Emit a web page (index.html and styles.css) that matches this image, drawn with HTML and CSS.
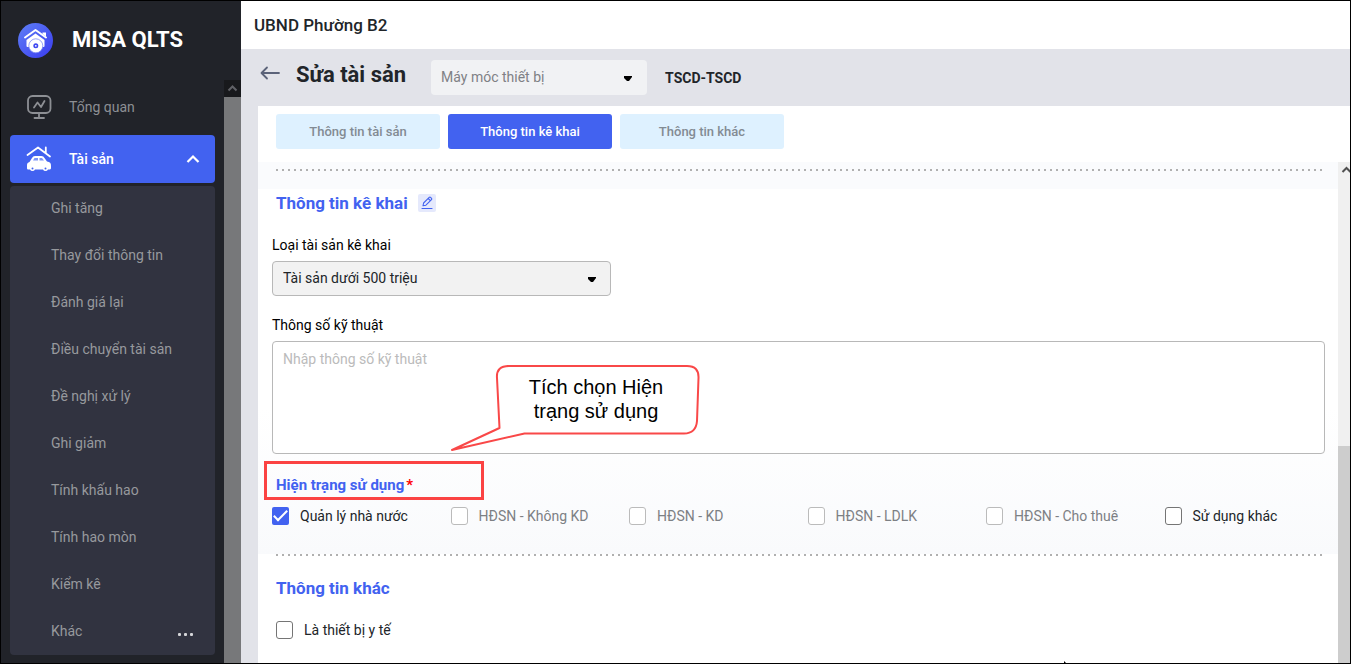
FILE: index.html
```html
<!DOCTYPE html>
<html lang="vi">
<head>
<meta charset="utf-8">
<meta name="viewport" content="width=device-width, initial-scale=1">
<title>MISA QLTS</title>
<link rel="stylesheet" href="styles.css">
</head>
<body>
<div class="app">
  <aside class="sidebar">
    <div class="brand">
      <svg class="brand-logo" viewBox="0 0 35 35" aria-hidden="true">
        <defs><linearGradient id="lg" x1="0" y1="0" x2="1" y2="1"><stop offset="0" stop-color="#5f80f6"/><stop offset="1" stop-color="#3a3bef"/></linearGradient></defs>
        <circle cx="17.500" cy="17.500" r="17.500" fill="url(#lg)"/>
        <path d="M7 14.500 17.500 7 28 14.500" fill="none" stroke="#fff" stroke-width="2" stroke-linecap="round" stroke-linejoin="round"/>
        <path d="M24.500 9.500h3.500v4L24.500 11z" fill="#fff"/>
        <path d="M8.500 17 17.500 10.500l9 6.500V23a1 1 0 0 1-1 1h-16a1 1 0 0 1-1-1z" fill="#fff"/>
        <circle cx="17.800" cy="22.800" r="7" fill="#fff" stroke="#7d8bf6" stroke-width="0.800"/>
        <circle cx="17.800" cy="22.800" r="2.500" fill="#3f48f0"/>
        <circle cx="17.800" cy="22.800" r="0.900" fill="#fff"/>
      </svg>
      <span class="brand-name">MISA QLTS</span>
    </div>
    <div class="side-body">
      <nav class="nav">
        <a class="nav-item" href="#">
          <svg class="nav-icon" viewBox="0 0 26 26" fill="none" stroke="#8d8f94" stroke-width="1.800" stroke-linecap="round" stroke-linejoin="round" aria-hidden="true">
            <rect x="2" y="2" width="22.500" height="17" rx="4.500"/>
            <path d="M13 19v4.500M8.500 24h9.500"/>
            <path d="M8 13.500 11.500 8.500l3.500 4.500 3.500-6"/>
          </svg>
          Tổng quan
        </a>
        <a class="nav-item active" href="#">
          <svg class="nav-icon" viewBox="0 0 26 26" aria-hidden="true">
            <path d="M1.500 9 12 1.500 24 10.500M19.800 7V1.500" fill="none" stroke="#fff" stroke-width="1.800" stroke-linecap="round" stroke-linejoin="round"/>
            <path d="M3.500 16 6 12a3.500 3.500 0 0 1 3-2h6.500a4 4 0 0 1 3 2l2.500 3.500c3 .3 4 1.500 4 4.500v2c0 1-.8 1.500-2 1.500h-1a2.800 2.800 0 0 1-5 0H9a2.800 2.800 0 0 1-5 0H2.500C1.500 23.500 1 23 1 22v-3c0-1.500 1-2.700 2.500-3z" fill="#fff"/>
            <path d="M7 14.500 8.500 12H12v2.500zM13.500 14.500V12h2.500l2 2.500z" fill="#7f95f5"/>
            <circle cx="6.500" cy="22.500" r="1" fill="#4262f0"/><circle cx="19.500" cy="22.500" r="1" fill="#4262f0"/>
          </svg>
          Tài sản
          <svg class="nav-caret" viewBox="0 0 14 10" aria-hidden="true"><path d="M1.500 8 7 2.500 12.500 8" fill="none" stroke="#fff" stroke-width="2.200"/></svg>
        </a>
        <ul class="submenu">
          <li><a href="#">Ghi tăng</a></li>
          <li><a href="#">Thay đổi thông tin</a></li>
          <li><a href="#">Đánh giá lại</a></li>
          <li><a href="#">Điều chuyển tài sản</a></li>
          <li><a href="#">Đề nghị xử lý</a></li>
          <li><a href="#">Ghi giảm</a></li>
          <li><a href="#">Tính khấu hao</a></li>
          <li><a href="#">Tính hao mòn</a></li>
          <li><a href="#">Kiểm kê</a></li>
          <li><a href="#">Khác
            <svg class="more" viewBox="0 0 16 4" fill="#d5d6d9" aria-hidden="true"><rect x="0" y="0" width="3" height="3" rx="1"/><rect x="6" y="0" width="3" height="3" rx="1"/><rect x="12" y="0" width="3" height="3" rx="1"/></svg></a></li>
        </ul>
      </nav>
      <div class="side-scroll">
        <svg viewBox="0 0 17 17" aria-hidden="true"><path d="M4.500 10.500l4-4 4 4" fill="none" stroke="#606166" stroke-width="2"/></svg>
      </div>
    </div>
  </aside>

  <main class="main">
    <header class="topbar">UBND Phường B2</header>
    <div class="titlebar">
      <button class="back" type="button" aria-label="Quay lại">
        <svg viewBox="0 0 20 14" aria-hidden="true"><path d="M19 7H2M7 1.500 1.500 7 7 12.500" fill="none" stroke="#5b6379" stroke-width="1.800" stroke-linecap="round" stroke-linejoin="round"/></svg>
      </button>
      <h1 class="title">Sửa tài sản</h1>
      <div class="picker picker-type">
        <select aria-label="Loại tài sản" disabled><option>Máy móc thiết bị</option></select>
        <svg class="arrow" viewBox="0 0 8 6" aria-hidden="true"><path d="M0 0h8v1L5 5H3L0 2z"/></svg>
      </div>
      <strong class="code">TSCD-TSCD</strong>
    </div>
    <div class="panel">
      <div class="tabs">
        <button type="button" class="tab">Thông tin tài sản</button>
        <button type="button" class="tab selected">Thông tin kê khai</button>
        <button type="button" class="tab">Thông tin khác</button>
      </div>
      <div class="scroller">
        <div class="content">
          <div class="prev-section"><div class="dots"></div></div>
          <section class="section declare">
            <div class="heading-row">
              <h2 class="heading">Thông tin kê khai</h2>
              <button class="edit" type="button" aria-label="Sửa">
                <svg viewBox="0 0 18 18" fill="none" stroke="#4262f0" stroke-width="1.100" stroke-linejoin="round" stroke-linecap="round" aria-hidden="true"><path d="M4 14.500h10"/><path d="M5 11.800 5.600 9 11.200 3.400a1 1 0 0 1 1.400 0l.9.900a1 1 0 0 1 0 1.400L7.900 11.200zM10.200 4.500l2.200 2.200"/></svg>
              </button>
            </div>
            <label class="label" for="kind">Loại tài sản kê khai</label>
            <div class="picker picker-kind">
              <select id="kind"><option>Tài sản dưới 500 triệu</option></select>
              <svg class="arrow" viewBox="0 0 8 6" aria-hidden="true"><path d="M0 0h8v1L5 5H3L0 2z"/></svg>
            </div>
            <label class="label" for="spec">Thông số kỹ thuật</label>
            <div class="spec-wrap">
              <textarea id="spec" class="spec" placeholder="Nhập thông số kỹ thuật"></textarea>
              <div class="callout">
                <svg viewBox="0 0 250 88" aria-hidden="true"><path d="M57 2H237Q249 2 248.500 14L247 57Q246 69.500 234 69.500H74.500L2 86 49.500 64 47 14Q46 2 59 2z" fill="#fff" stroke="#f94848" stroke-width="2" stroke-linejoin="round"/></svg>
                <p>Tích chọn Hiện<br>trạng sử dụng</p>
              </div>
            </div>
            <h3 class="subheading">Hiện trạng sử dụng<span class="req">*</span></h3>
            <div class="checks">
              <label class="check"><input type="checkbox" checked>Quản lý nhà nước</label>
              <label class="check off"><input type="checkbox" disabled>HĐSN - Không KD</label>
              <label class="check off"><input type="checkbox" disabled>HĐSN - KD</label>
              <label class="check off"><input type="checkbox" disabled>HĐSN - LDLK</label>
              <label class="check off"><input type="checkbox" disabled>HĐSN - Cho thuê</label>
              <label class="check"><input type="checkbox">Sử dụng khác</label>
            </div>
          </section>
          <section class="section other">
            <div class="dots"></div>
            <h2 class="heading">Thông tin khác</h2>
            <label class="check"><input type="checkbox">Là thiết bị y tế</label>
          </section>
        </div>
        <div class="main-scroll">
          <svg viewBox="0 0 12 17" aria-hidden="true"><path d="M4.500 10l4-4 4 4" fill="none" stroke="#505050" stroke-width="2"/></svg>
          <div class="thumb"></div>
        </div>
      </div>
    </div>
  </main>
  <svg class="pointer" viewBox="0 0 3 3" aria-hidden="true"><path d="M0 0l3 3H0z"/></svg>
</div>
</body>
</html>
```
FILE: styles.css
```css
*, ::before, ::after { box-sizing: border-box; }
body { margin: 0; font-family: Roboto, "Noto Sans", sans-serif; font-size: 14px; color: #212529; }
h1, h2, h3, p, ul { margin: 0; padding: 0; }
a { color: inherit; text-decoration: none; }
button, select, textarea, input { font: inherit; margin: 0; }
svg { display: block; }

.app { position: relative; display: grid; grid-template-columns: 240px minmax(0, 1fr); min-height: 100vh; border: 1px solid #000; }

.sidebar { background: #212329; color: #97999d; display: flex; flex-direction: column; }
.brand { display: flex; align-items: center; gap: 19px; height: 79px; padding: 0 0 1px 17px; color: #fff; }
.brand-logo { width: 35px; height: 35px; }
.brand-name { font-size: 22px; line-height: 26px; font-weight: 700; }
.side-body { flex: 1; display: flex; }
.nav { flex: 1; padding: 3px 9px 8px; }
.nav-item { display: flex; align-items: center; height: 48px; margin-bottom: 3px; padding: 0 15px 0 16px; border-radius: 4px; color: #8d8f94; }
.nav-item.active { background: #4262f0; color: #fff; font-weight: 500; }
.nav-item:first-child { margin-bottom: 4px; }
.nav-icon { width: 26px; height: 26px; margin-right: 17px; }
.nav-caret { width: 14px; height: 10px; margin-left: auto; }
.submenu { list-style: none; background: #313340; border-radius: 4px; display: grid; row-gap: 1px; }
.submenu a { display: flex; align-items: center; justify-content: space-between; height: 46px; padding: 0 21px 2px 41px; }
.more { width: 16px; height: 4px; margin-top: 7px; }
.side-scroll { width: 17px; background: #77787a; }
.side-scroll svg { background: #18191c; }

.main { display: flex; flex-direction: column; background: #e2e3e9; min-width: 0; }
.topbar { display: flex; align-items: center; height: 48px; padding-left: 13px; background: #fff; font-size: 17px; font-weight: 500; }
.titlebar { display: flex; align-items: center; height: 57px; padding-left: 19px; }
.back { border: 0; padding: 0 0 10px; background: none; }
.back svg { width: 20px; height: 14px; }
.title { margin: 0 25px 6px 16px; font-size: 22px; line-height: 28px; font-weight: 700; }
.code { margin-left: 18px; font-weight: 700; }

.picker { position: relative; height: 35px; }
.picker select { appearance: none; width: 100%; height: 100%; border: 0; border-radius: 4px; padding: 0 32px 2px 10px; background: #f1f2f4; color: #7f8185; opacity: 1; }
.picker .arrow { position: absolute; right: 15px; top: 16px; width: 8px; height: 6px; pointer-events: none; }
.picker-type { width: 216px; }
.picker-kind { width: 339px; margin-bottom: 19px; }
.picker-kind select { border: 1px solid #b8b8b8; background: #f2f2f2; color: #212529; }

.panel { flex: 1; display: flex; flex-direction: column; margin-left: 17px; background: #fff; }
.tabs { display: flex; gap: 8px; padding: 8px 18px 13px; }
.tab { width: 164px; height: 35px; border: 0; border-radius: 3px; padding: 0; background: #def1ff; color: #838b93; font-size: 13px; font-weight: 500; }
.tab.selected { background: #4262f0; color: #fff; }

.scroller { flex: 1; display: flex; }
.content { flex: 1; min-width: 0; }
.prev-section { height: 27px; padding: 7px 13px 0 14px; background: #fafbfd; }
.dots { height: 2px; margin: 0 3px 0 4px; background: repeating-linear-gradient(90deg, #b0b0b0 0 2px, transparent 2px 6px); }
.section { padding: 0 13px 0 14px; }
.declare { background: linear-gradient(#fff 60%, #f9fafc); padding-bottom: 28px; }
.heading-row { display: flex; align-items: center; gap: 10px; padding-top: 2px; margin-bottom: 20px; }
.heading { padding-left: 4px; color: #4262f0; font-size: 17px; line-height: 24px; font-weight: 700; }
.edit { border: 0; padding: 0; border-radius: 2px; background: #e5e9fc; }
.edit svg { width: 18px; height: 18px; }
.label { display: block; color: #000; line-height: 20px; margin-bottom: 6px; }
.spec-wrap { position: relative; }
.spec { display: block; width: 100%; height: 113px; border: 1px solid #b8b8b8; border-radius: 4px; padding: 7px 10px; line-height: 20px; background: #fff; resize: none; }
.spec::placeholder { color: #bbb; opacity: 1; }
.callout { position: absolute; left: 178px; top: 23px; width: 250px; }
.callout p { position: absolute; top: 11px; left: 46px; width: 200px; text-align: center; font: 20px/24px "Liberation Sans", Arial, sans-serif; color: #000; }
.subheading { position: relative; padding: 21px 0 0 4px; color: #4262f0; font-size: 15px; line-height: 20px; font-weight: 700; }
.subheading::after { content: ""; position: absolute; left: -8px; top: 7px; width: 220px; height: 39px; border: 3px solid #fb4343; }
.req { color: #f00; margin-left: 2px; }
.checks { display: grid; grid-template-columns: repeat(6, 1fr); column-gap: 18px; margin-top: 11px; }
.check { display: flex; align-items: center; gap: 11px; line-height: 20px; white-space: nowrap; color: #212529; }
.check.off { color: #7d8084; }
.check input { appearance: none; width: 17px; height: 18px; border: 1px solid #757575; border-radius: 3px; background: #fff; }
.check.off input { border-color: #bbb; }
.check input:checked { border: 0; border-radius: 2px; background: #4262f0; position: relative; }
.check input:checked::after { content: ""; position: absolute; left: 5px; top: 0; width: 7px; height: 14px; border: solid #fff; border-width: 0 2px 2px 0; transform: rotate(45deg); }
.other .heading { margin: 20px 0; }
.other .check { padding-left: 4px; }

.main-scroll { display: flex; flex-direction: column; width: 12px; background: #f0f0f0; overflow: hidden; }
.main-scroll svg { height: 17px; }
.thumb { margin-top: auto; height: 217px; background: #cdcdcd; }
.pointer { position: absolute; left: 1063px; bottom: -1px; width: 3px; height: 3px; }
```
